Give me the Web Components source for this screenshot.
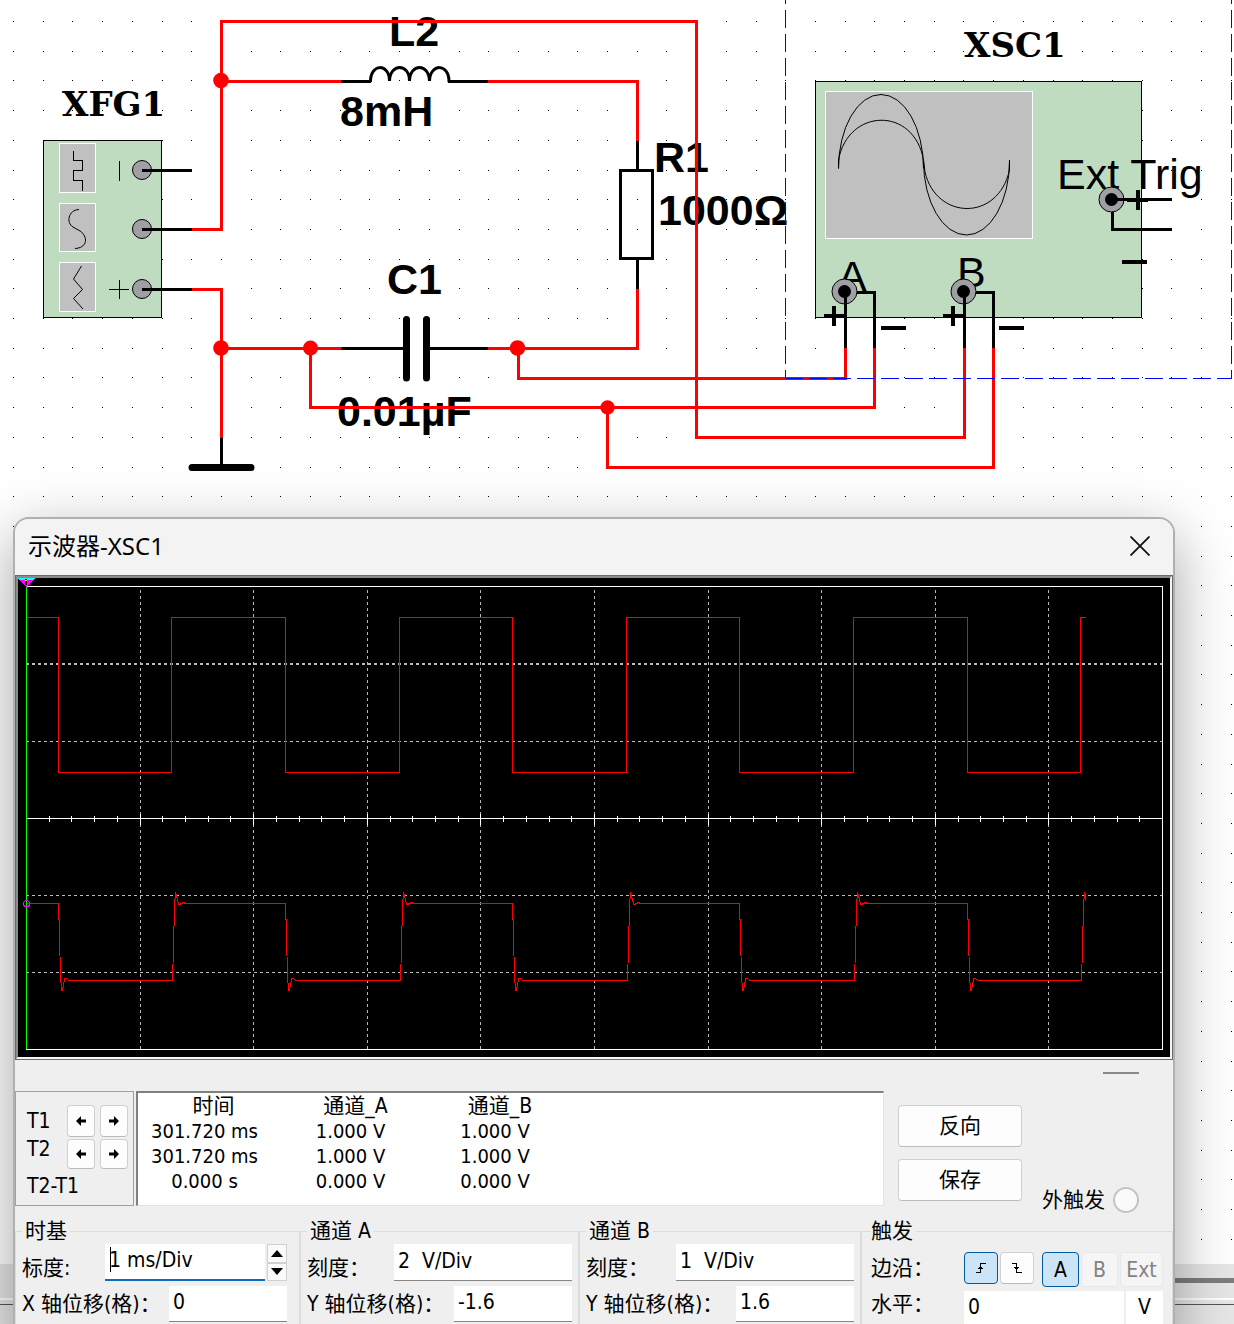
<!DOCTYPE html>
<html lang="zh-CN">
<head>
<meta charset="utf-8">
<title>示波器-XSC1</title>
<style>
  html, body { margin: 0; height: 100%; overflow: hidden; background: #fff; }
  body { font: 20px/26px "DejaVu Sans Condensed", "Noto Sans CJK SC", sans-serif; color: #000; }
</style>
</head>
<body>
<desk-top>
  <circuit-sheet slot="back"></circuit-sheet>
  <tool-window heading="示波器-XSC1">
    <scope-screen></scope-screen>
    <scope-readout></scope-readout>
    <scope-controls></scope-controls>
  </tool-window>
</desk-top>

<script>
const define = (name, html, setup) => {
  const tpl = document.createElement('template');
  tpl.innerHTML = html;
  customElements.define(name, class extends HTMLElement {
    constructor() {
      super();
      this.attachShadow({ mode: 'open' }).append(tpl.content.cloneNode(true));
    }
    connectedCallback() { if (setup) setup(this, this.shadowRoot); }
  });
};

/* The desktop: drawing sheet at the back, window stacked above it */
define('desk-top', `
<style>
  :host { display: grid; grid-template: 100vh / 100%; height: 100vh; overflow: hidden; }
  .layer { grid-area: 1 / 1; min-width: 0; }
  .front { padding: 517px 59px 0 13px; }
</style>
<div class="layer"><slot name="back"></slot></div>
<div class="layer front"><slot></slot></div>`);

/* Schematic sheet */
define('circuit-sheet', `
<style>
  :host { display: block; height: 100%; }
  svg { display: block; width: 100%; height: 100%; }
  .crisp { shape-rendering: crispEdges; }
  .wire { fill: none; stroke: #f00; stroke-width: 3; stroke-linecap: square; }
  .pin { fill: none; stroke: #000; stroke-width: 3; }
  .thin { fill: none; stroke: #000; stroke-width: 1; }
  .body { fill: #c0dcc0; stroke: #000; }
  .lcd { fill: #c0c0c0; stroke: #fff; }
  .jack { fill: #a0a0a4; stroke: #000; }
  .sign { fill: none; stroke: #000; stroke-width: 4; }
  .val { font: bold 43px "Liberation Sans", Arial, sans-serif; }
  .port { font: 43px "Liberation Sans", Arial, sans-serif; }
  .ref { font: bold 34px "DejaVu Serif", serif; }
  .zone { fill: none; stroke: #00f; stroke-dasharray: 18 6; }
</style>
<svg role="img" aria-label="RLC circuit">
  <g id="dots" class="crisp"></g>
  <g class="crisp">
    <rect y="1264" width="100%" height="60" fill="#e6e6e6"/>
    <rect x="600" y="1278" width="100%" height="5" fill="#7d7d7d"/>
    <rect y="1298" width="100%" height="2" fill="#fff"/>
    <rect y="1304" width="100%" height="1" fill="#555"/>
  </g>

  <g class="crisp">
    <rect class="body" x="43.5" y="140.5" width="118" height="177"/>
    <rect class="lcd" x="59.5" y="143.5" width="36" height="49"/>
    <rect class="lcd" x="59.5" y="203.5" width="36" height="48"/>
    <rect class="lcd" x="59.5" y="262.5" width="36" height="49"/>
    <path class="thin" d="M73.5 151V160.5H82.5V170.5H73.5V180.5H82.5V191"/>
    <path class="thin" d="M119.5 161V181M109 289.5H129M119.5 280V299"/>
    <rect class="body" x="815.5" y="81.5" width="326" height="236"/>
    <rect class="lcd" x="825.5" y="91.5" width="207" height="147"/>
  </g>
  <path class="thin" d="M79 209.500C68 210 66 223 73 227L81 231.500C89 239 86 248 75 248.500"/>
  <path class="thin" d="M81.500 266L73.500 279L82.500 289.500L73.500 298.500L83 309"/>
  <path class="thin" d="M838.500 168.500A42.500 74 0 0 1 923.500 168.500M923.500 161A43 74 0 0 0 1009.500 161"/>
  <path class="thin" d="M838.500 168.500V160C848 108 914 106 923.500 160L925 172C936 220 998 222 1009.500 170V160"/>
  <circle class="jack" cx="142" cy="170" r="9.500"/>
  <circle class="jack" cx="142" cy="229" r="9.500"/>
  <circle class="jack" cx="142" cy="289" r="9.500"/>

  <text class="ref" x="62" y="116">XFG1</text>
  <text class="ref" x="964" y="57">XSC1</text>
  <text class="val" x="389" y="46">L2</text>
  <text class="val" x="340" y="126">8mH</text>
  <text class="val" x="654" y="172">R1</text>
  <text class="val" x="658" y="225">1000Ω</text>
  <text class="val" x="387" y="294">C1</text>
  <text class="val" x="337" y="426">0.01µF</text>
  <text class="port" x="1057" y="189">Ext Trig</text>
  <text class="port" x="838" y="291">A</text>
  <text class="port" x="957" y="287">B</text>

  <g class="crisp">
    <path class="pin" d="M142 170.5H192M142 229.500H192M142 289.500H192"/>
    <path class="wire" d="M193 229.500H221.500V21.500H696.500V437.500H964.500V349"/>
    <path class="wire" d="M221.500 81.500H340M489 81.500H637.500V140"/>
    <path class="wire" d="M193 289.500H221.500V437M221.500 348.500H340M489 348.500H637.500V290"/>
    <path class="wire" d="M310.500 348.500V407.500H874.500V349"/>
    <path class="wire" d="M518.500 348.500V378.500H845.500V349"/>
    <path class="wire" d="M607.500 407.500V467.500H993.500V349"/>
    <path class="pin" d="M341 81.500H371M448 81.500H488M637.500 141V170M637.500 260V289M341 348.500H405M428 348.500H488M221.500 438V467"/>
    <rect class="pin" x="620.500" y="170.500" width="32" height="88"/>
    <path class="pin" d="M845.500 292V348M845.500 292.500H874.500V348M964.500 292V348M964.500 292.500H993.500V348"/>
    <path class="pin" d="M1112.500 199.500H1172M1112.500 199.500V229.500H1172"/>
  </g>
  <path class="pin" d="M370.500 82C370 63 389.500 63 389.500 81C390 63 409.500 63 409.500 81C410 63 429 63 429.500 81C430 63 449.500 63 449 82"/>
  <path d="M406.500 319.500V378M426.500 319.500V378M192 467.500H251" stroke="#000" stroke-width="7" stroke-linecap="round"/>
  <g fill="#f00">
    <circle cx="221" cy="80.500" r="7.800"/><circle cx="221" cy="348" r="7.800"/>
    <circle cx="310.500" cy="348" r="7.500"/><circle cx="517.500" cy="348" r="7.800"/>
    <circle cx="607.500" cy="407.500" r="7.200"/>
  </g>
  <g>
    <circle class="jack" cx="844.500" cy="291.500" r="12.500"/><circle cx="844.500" cy="291.500" r="6.500"/>
    <circle class="jack" cx="963.500" cy="291.500" r="12.500"/><circle cx="963.500" cy="291.500" r="6.500"/>
    <circle class="jack" cx="1111.500" cy="199.500" r="12.500"/><circle cx="1111.500" cy="199.500" r="6.500"/>
    <path class="pin" d="M845.500 292V308M964.500 292V308M1112 199.500H1128"/>
  </g>
  <path class="sign" d="M824 316H845M834 306V326M943 316H964M953 306V326M1127 200H1148M1138 190V210M881 328H906M999 328H1024M1122 262H1147"/>
  <g class="crisp">
    <path class="zone" d="M785.500 -14V378"/>
    <path class="zone" d="M1231.500 -14V378"/>
    <path class="zone" d="M785 378.500H1232"/>
  </g>
</svg>`, (el, root) => {
  const step = 29.7;
  let d = '';
  for (let j = 0; j < 42; j++)
    for (let i = 0; i < 90; i++)
      d += `M${Math.round(13 + i * step)} ${Math.round(21 + j * step)}h1v1h-1z`;
  root.getElementById('dots').innerHTML = `<path d="${d}"/>`;
});

/* Window frame with title bar */
define('tool-window', `
<style>
  :host { display: block; border: 2px solid #b0b0b0; border-bottom: 0; border-radius: 16px 16px 0 0;
          background: #efefef; box-shadow: 0 18px 60px rgba(0,0,0,.36); overflow: hidden; }
  header { display: flex; align-items: center; justify-content: space-between; height: 56px;
           box-sizing: border-box; padding: 0 19px 2px 13px; background: #f3f3f3; }
  h1 { margin: 0; font: 24px/32px "Noto Sans", "Noto Sans CJK SC", sans-serif; }
  button { display: grid; place-items: center; width: 28px; height: 28px; padding: 0; border: 0; background: none; }
  svg { width: 20px; height: 20px; }
</style>
<header><h1></h1>
<button aria-label="关闭"><svg viewBox="0 0 20 20"><path d="M.5.5 19.500 19.500M19.500.5.500 19.500" stroke="#111" stroke-width="1.800"/></svg></button></header>
<slot></slot>`, (el, root) => { root.querySelector('h1').textContent = el.getAttribute('heading'); });

/* Display with grid and both traces */
define('scope-screen', `
<style>
  :host { display: block; border: 1px solid #696969; }
  .in { border: 2px solid; border-color: #8c8c8c #f4f4f4 #f4f4f4 #8c8c8c; background: #000; }
  svg { display: block; width: 100%; shape-rendering: crispEdges; }
  .dash { fill: none; stroke: #b8b8b8; stroke-dasharray: 3 3; }
  .axis { fill: none; stroke: #fff; }
  .trace { fill: none; stroke: #f00; stroke-width: 1; }
</style>
<div class="in">
<svg viewBox="18 578 1152 479" role="img" aria-label="Traces A and B">
  <path id="cols" class="dash"/>
  <path class="dash" d="M26 741.500H1162M26 895.500H1162M26 972.500H1162"/>
  <path class="dash" stroke-width="2" d="M26 664H1162"/>
  <path class="axis" d="M26 586.500H1162.500V1049.500H26"/>
  <path id="ticks" class="axis"/>
  <path id="a" class="trace"/>
  <path id="b" class="trace"/>
  <path d="M26.500 586V1049" stroke="#0f0"/>
  <circle cx="26.500" cy="903.500" r="3" fill="none" stroke="#f0f"/>
  <path d="M18 578H35L26.500 587z" fill="#f0f"/>
  <path d="M18 578H35L34 580H19z" fill="#0ff"/>
  <path d="M25 579H27V585H25z" fill="#000"/><path d="M25 580H27V581H25z" fill="#ff0"/>
</svg></div>`, (el, root) => {
  const set = (id, d) => root.getElementById(id).setAttribute('d', d);
  const tick = 1136 / 50;
  let cols = '', ticks = 'M26 818.500H1162';
  for (let i = 1; i < 10; i++) cols += `M${Math.round(26 + i * 5 * tick) + .5} 590V1049`;
  for (let i = 1; i < 50; i++) {
    const x = Math.round(26 + i * tick) + .5;
    ticks += i % 5 ? `M${x} 816V822` : `M${x} 814V825`;
  }
  set('cols', cols); set('ticks', ticks);

  const edges = [58, 171, 285, 399, 512, 626, 739, 853, 967, 1080];
  let a = 'M26 617.500', b = 'M26 903.500';
  edges.forEach((x, i) => {
    const rise = i % 2;
    a += `H${x + .5}V${rise ? 617.5 : 772.5}`;
    b += rise
      ? `H${x + 1.5}L${x + 2.5} 947L${x + 3.5} 906L${x + 4.5} 892.500L${x + 5.5} 896`
        + (i < 9 ? `L${x + 7.5} 904H${x + 9.5}L${x + 12.5} 902.500L${x + 14.5} 903.500` : `L${x + 5.5} 901`)
      : `H${x + .5}L${x + 1.5} 935L${x + 2.5} 976L${x + 3.5} 990H${x + 4.5}L${x + 6.5} 979L${x + 8.500} 978.500L${x + 10.5} 980.500`;
  });
  set('a', a + 'H1086'); set('b', b);
});

/* Push button */
define('push-button', `
<style>
  :host { display: flex; }
  button { flex: 1; min-width: 0; display: grid; place-items: center; padding: 0; font: inherit; color: inherit;
           background: #fdfdfd; border: 1px solid #d0d0d0; border-bottom-color: #bbb; border-radius: 4px; }
  :host([on]) button { background: #cce4f7; border: 1px solid #005a9e; }
  button:disabled { color: #838383; background: #f5f5f5; border-color: #e8e8e8; }
</style>
<button><slot></slot></button>`, (el, root) => {
  const b = root.querySelector('button');
  b.disabled = el.hasAttribute('off');
  if (el.hasAttribute('hint')) b.setAttribute('aria-label', el.getAttribute('hint'));
});

/* Cursor panel, measured values, action buttons */
define('scope-readout', `
<style>
  :host { display: block; }
  .grip { display: flex; justify-content: flex-end; padding: 12px 34px 17px; }
  .grip i { width: 36px; height: 2px; background: #888; }
  .row { display: flex; height: 115px; gap: 2px; }
  .cursors { box-sizing: border-box; width: 119px; border: 1px solid #a0a0a0; display: flex; padding: 13px 5px 0 11px; }
  .names { width: 40px; padding-top: 2px; font-size: 21px; line-height: 28px; white-space: nowrap; }
  .names :last-child { padding-top: 9px; }
  .keys { display: grid; grid-template: 32px 30px / 28px 28px; gap: 2px 5px; }
  .keys svg { width: 10px; height: 10px; }
  .data { flex: 1; box-sizing: border-box; background: #fff; border: solid; border-width: 2px 1px 1px 2px;
          border-color: #808080 #e3e3e3 #e3e3e3 #808080; padding-top: 1px; }
  table { border-collapse: collapse; table-layout: fixed; width: 422px; line-height: 25px; white-space: nowrap; text-align: center; }
  th, td { padding: 0; font-weight: 400; }
  th { padding-left: 10px; font-size: 21px; } th:first-child { padding-left: 18px; }
  .side { width: 287px; box-sizing: border-box; padding: 14px 34px 0 12px; display: flex; justify-content: space-between; font-size: 21px; }
  .acts { width: 124px; display: grid; grid-auto-rows: 42px; gap: 12px; align-content: start; }
  .ext { display: flex; align-items: center; gap: 8px; align-self: flex-end; margin-bottom: -7px; line-height: 26px; white-space: nowrap; }
  input { appearance: none; width: 26px; height: 26px; margin: 0; border: 2px solid #c4c4c4; border-radius: 50%; background: #fafafa; }
</style>
<div class="grip"><i></i></div>
<div class="row">
  <div class="cursors">
    <div class="names"><div>T1</div><div>T2</div><div>T2-T1</div></div>
    <div class="keys">
      <push-button hint="T1 ←"><svg viewBox="0 0 10 10"><path d="M0 5 5 0V3.500H10V6.500H5V10z"/></svg></push-button>
      <push-button hint="T1 →"><svg viewBox="0 0 10 10"><path d="M10 5 5 0V3.500H0V6.500H5V10z"/></svg></push-button>
      <push-button hint="T2 ←"><svg viewBox="0 0 10 10"><path d="M0 5 5 0V3.500H10V6.500H5V10z"/></svg></push-button>
      <push-button hint="T2 →"><svg viewBox="0 0 10 10"><path d="M10 5 5 0V3.500H0V6.500H5V10z"/></svg></push-button>
    </div>
  </div>
  <div class="data">
    <table>
      <colgroup><col style="width:133px"><col style="width:159px"><col style="width:130px"></colgroup>
      <thead><tr><th>时间</th><th>通道_A</th><th>通道_B</th></tr></thead>
      <tbody>
        <tr><td>301.720 ms</td><td>1.000 V</td><td>1.000 V</td></tr>
        <tr><td>301.720 ms</td><td>1.000 V</td><td>1.000 V</td></tr>
        <tr><td>0.000 s</td><td>0.000 V</td><td>0.000 V</td></tr>
      </tbody>
    </table>
  </div>
  <div class="side">
    <div class="acts"><push-button>反向</push-button><push-button>保存</push-button></div>
    <div class="ext"><label for="ext">外触发</label><input id="ext" type="radio"></div>
  </div>
</div>`);

/* Labelled text box */
define('scope-field', `
<style>
  :host { display: flex; justify-content: space-between; height: 36px; align-items: center; }
  :host([first]) { align-items: flex-end; height: 37px; }
  :host([high]) { align-items: flex-start; }
  label { font-size: 21px; line-height: 26px; white-space: nowrap; }
  .box { display: flex; gap: 2px; align-self: stretch; }
  input { box-sizing: border-box; width: var(--w, 118px); font: inherit; font-size: 21px; color: #000; background: #fff; border: 0;
          border-bottom: 1px solid #868686; padding: 0 4px 3px; border-radius: 0; outline: 0; }
  :host([active]) input { border-bottom: 2px solid #0f6cbd; 
          background: linear-gradient(#000, #000) 5px 3px / 1px 25px no-repeat #fff; }
</style>
<label for="i"></label><div class="box"><input id="i"><slot></slot></div>`, (el, root) => {
  root.querySelector('label').textContent = el.getAttribute('label');
  root.querySelector('input').value = el.getAttribute('value');
});

/* Up / down stepper */
define('spin-keys', `
<style>
  :host { display: grid; width: 20px; grid-auto-rows: 1fr; }
  button { display: grid; place-items: center; padding: 0; background: #fafafa; border: 1px solid #d0d0d0; }
  svg { width: 12px; height: 7px; }
</style>
<button aria-label="增加"><svg viewBox="0 0 12 7"><path d="M0 7 6 0 12 7z"/></svg></button>
<button aria-label="减少"><svg viewBox="0 0 12 7"><path d="M0 0 6 7 12 0z"/></svg></button>`);

define('scope-controls', `
<style>
  :host { display: grid; grid-template-columns: 285fr 279fr 282fr 312fr; padding-top: 12px; }
  fieldset { min-width: 0; margin: 0; border: 1px solid #dcdcdc; padding: 0 6px 20px; }
  legend { padding: 0 3px; font-size: 21px; line-height: 26px; }
  fieldset > div { display: grid; gap: 5px; }
  .base { padding-right: 12px; }
  .trig { padding: 0 9px 20px; } .trig legend { padding: 0 3px 0 0; }
  .trig > div { gap: 4px; }
  .edge { display: flex; align-items: flex-start; height: 35px; padding-top: 8px; }
  .edge > span { flex: 1; font-size: 21px; line-height: 32px; white-space: nowrap; }
  .keys { display: flex; gap: 2px; align-items: flex-start; font-size: 21px; }
  .keys push-button { width: 37px; height: 35px; }
  .keys .s { width: 34px; height: 32px; }
  .keys .src { margin-left: 6px; }
  .keys .x { width: 43px; }
  .keys svg { width: 10px; height: 10px; }
  .unit { box-sizing: border-box; width: 37px; height: 36px; border: 0; padding: 0 0 4px; background: #fff; font: inherit; font-size: 21px; text-align: center; }
</style>
<fieldset class="base"><legend>时基</legend><div>
  <scope-field first active label="标度:" value="1 ms/Div" style="--w:160px"><spin-keys></spin-keys></scope-field>
  <scope-field label="X 轴位移(格)：" value="0"></scope-field></div></fieldset>
<fieldset><legend>通道 A</legend><div>
  <scope-field first label="刻度：" value="2  V/Div" style="--w:178px"></scope-field>
  <scope-field label="Y 轴位移(格)：" value="-1.6"></scope-field></div></fieldset>
<fieldset><legend>通道 B</legend><div>
  <scope-field first label="刻度：" value="1  V/Div" style="--w:178px"></scope-field>
  <scope-field label="Y 轴位移(格)：" value="1.6"></scope-field></div></fieldset>
<fieldset class="trig"><legend>触发</legend><div>
  <div class="edge"><span>边沿：</span><div class="keys">
    <push-button class="s" on hint="上升沿"><svg viewBox="0 0 10 10"><path d="M0 9.500H4.500V.5H10M2 5.500H7M3 4.500H6" fill="none" stroke="#000" shape-rendering="crispEdges"/></svg></push-button>
    <push-button class="s" hint="下降沿"><svg viewBox="0 0 10 10"><path d="M0 .5H4.500V9.500H10M2 4.500H7M3 5.500H6" fill="none" stroke="#000" shape-rendering="crispEdges"/></svg></push-button>
    <push-button class="src" on>A</push-button><push-button off>B</push-button><push-button class="x" off>Ext</push-button>
  </div></div>
  <scope-field high label="水平：" value="0" style="--w:160px"><input class="unit" value="V" aria-label="单位"></scope-field></div></fieldset>`);
</script>
</body>
</html>
